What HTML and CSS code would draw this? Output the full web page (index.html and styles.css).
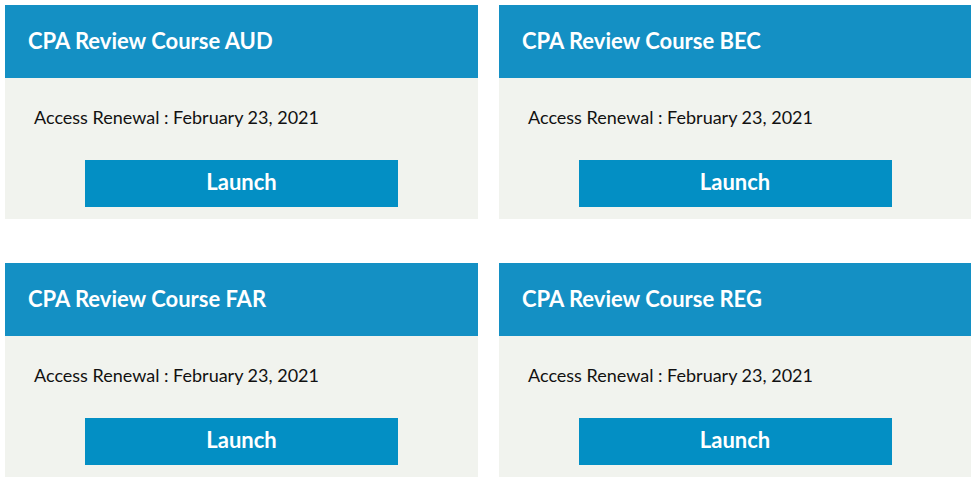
FILE: index.html
```html
<!DOCTYPE html>
<html>
<head>
<meta charset="utf-8">
<link rel="stylesheet" href="styles.css">
</head>
<body>
<div class="grid">
  <div class="card">
    <div class="card-head">CPA Review Course AUD</div>
    <div class="card-body">
      <div class="renewal">Access Renewal : February 23, 2021</div>
      <a class="launch">Launch</a>
    </div>
  </div>
  <div class="card">
    <div class="card-head">CPA Review Course BEC</div>
    <div class="card-body">
      <div class="renewal">Access Renewal : February 23, 2021</div>
      <a class="launch">Launch</a>
    </div>
  </div>
  <div class="card">
    <div class="card-head">CPA Review Course FAR</div>
    <div class="card-body">
      <div class="renewal">Access Renewal : February 23, 2021</div>
      <a class="launch">Launch</a>
    </div>
  </div>
  <div class="card">
    <div class="card-head">CPA Review Course REG</div>
    <div class="card-body">
      <div class="renewal">Access Renewal : February 23, 2021</div>
      <a class="launch">Launch</a>
    </div>
  </div>
</div>
</body>
</html>
```
FILE: styles.css
```css
html, body {
  margin: 0;
  padding: 0;
  background: #ffffff;
}
body {
  font-family: Lato, "Open Sans", "Liberation Sans", sans-serif;
}
.grid {
  display: grid;
  grid-template-columns: 473px 472px;
  column-gap: 21px;
  row-gap: 44px;
  padding: 5px 0 0 5px;
}
.card {
  display: flex;
  flex-direction: column;
}
.card-head {
  height: 73px;
  box-sizing: border-box;
  padding: 0 0 3px 23px;
  background: #1490c4;
  color: #ffffff;
  font-weight: 700;
  font-size: 22px;
  display: flex;
  align-items: center;
}
.card-body {
  height: 141px;
  background: #f1f3ee;
  display: flex;
  flex-direction: column;
  align-items: stretch;
}
.renewal {
  font-size: 18px;
  color: #111111;
  padding: 27px 0 0 29px;
  line-height: 24px;
  height: 24px;
}
.launch {
  align-self: center;
  margin-top: 31px;
  width: 313px;
  height: 47px;
  box-sizing: border-box;
  padding-bottom: 4px;
  background: #038fc4;
  color: #ffffff;
  font-weight: 700;
  font-size: 22px;
  display: flex;
  align-items: center;
  justify-content: center;
}
```
